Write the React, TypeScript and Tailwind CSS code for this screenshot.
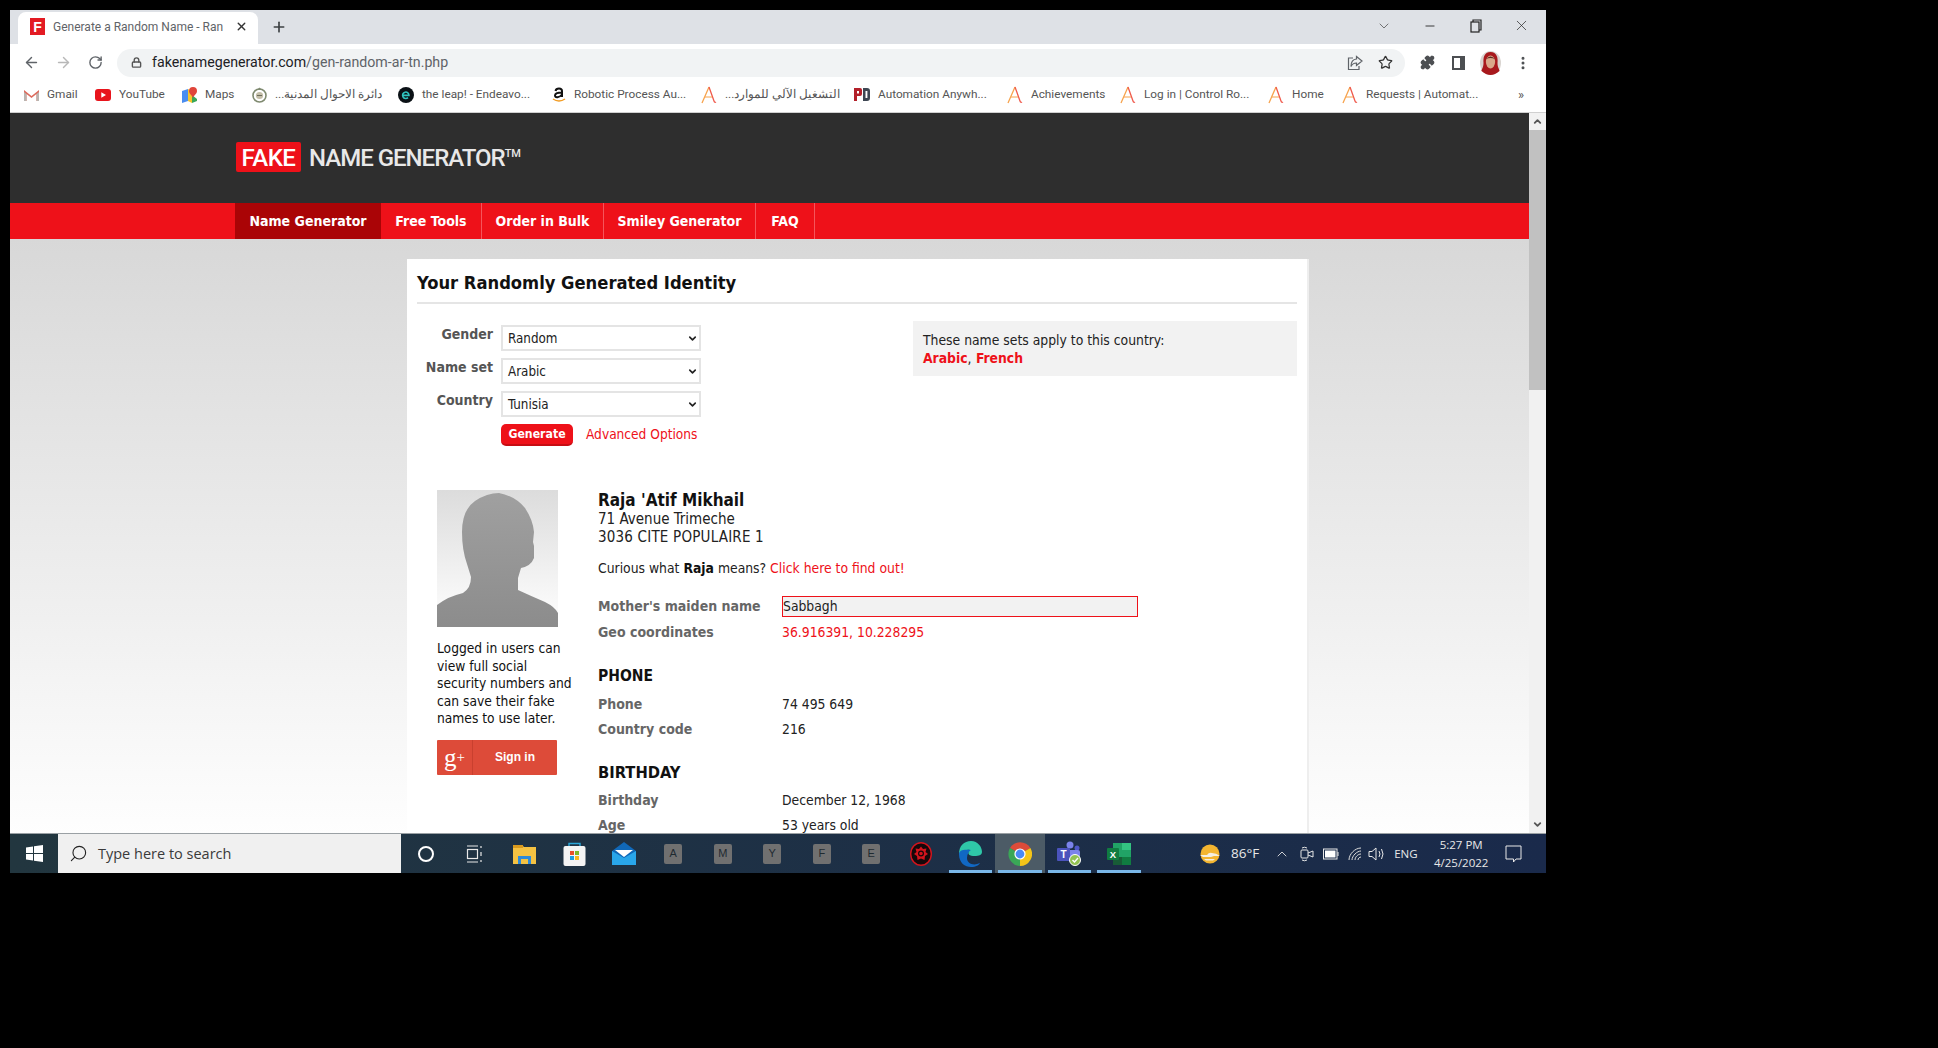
import React from "react";
import {
  ArrowLeft,
  ArrowRight,
  RotateCw,
  Lock,
  Star,
  Puzzle,
  EllipsisVertical,
  ChevronDown,
  ChevronUp,
  Minus,
  X,
  Plus,
  Search,
} from "lucide-react";

const tahoma = "font-['DejaVu_Sans_Condensed','DejaVu_Sans',sans-serif]";

function AIcon() {
  return (
    <svg width="16" height="18" viewBox="0 0 16 18" fill="none">
      <path d="M1 17 L8 1" stroke="#f7a24b" strokeWidth="1.3" />
      <path d="M8 1 L13 15 Q13.6 17 15 16" stroke="#ef5a4c" strokeWidth="1.3" />
      <path d="M4 11 L11 11" stroke="#f7a24b" strokeWidth="1" />
    </svg>
  );
}

function GmailIcon() {
  return (
    <svg width="15" height="12" viewBox="0 0 15 12">
      <path d="M0 1 L7.5 7 L15 1 V12 H12.5 V5 L7.5 9 L2.5 5 V12 H0 Z" fill="#dd6a5c" />
      <path d="M0 3 V12 H2.5 V5 Z M15 3 V12 H12.5 V5 Z" fill="#b9b4b0" />
    </svg>
  );
}

function YoutubeIcon() {
  return (
    <svg width="16" height="12" viewBox="0 0 16 12">
      <rect width="16" height="12" rx="3" fill="#e8141c" />
      <path d="M6.3 3.2 L11 6 L6.3 8.8 Z" fill="#fff" />
    </svg>
  );
}

function MapsIcon() {
  return (
    <svg width="15" height="16" viewBox="0 0 15 16">
      <path d="M0 4 L6 2 V14 L0 16 Z" fill="#4a8df0" />
      <path d="M6 2 L10 4 V16 L6 14 Z" fill="#f7c52b" />
      <path d="M10 8 L15 12 V14 L10 16 Z" fill="#3aa757" />
      <path d="M11 0 A4 4 0 0 1 15 4 C15 7 12 8 11 11 C10 8 7 7 7 4 A4 4 0 0 1 11 0 Z" fill="#e0453a" />
    </svg>
  );
}

function SealIcon() {
  return (
    <svg width="15" height="16" viewBox="0 0 15 16" fill="none">
      <circle cx="7.5" cy="8.5" r="6.5" stroke="#7f8a70" strokeWidth="1.6" />
      <circle cx="7.5" cy="8.5" r="3.6" fill="#c4bfa9" />
      <path d="M5 3 L7.5 0.5 L10 3 Z" fill="#7f8a70" />
      <path d="M5 8.5 H10" stroke="#6d6d5c" />
    </svg>
  );
}

function EIcon() {
  return (
    <svg width="16" height="16" viewBox="0 0 16 16">
      <circle cx="8" cy="8" r="8" fill="#0b1116" />
      <path d="M4.8 8.4 H11 A3.2 3.2 0 1 0 10 10.6" fill="none" stroke="#2fc4c0" strokeWidth="1.6" />
    </svg>
  );
}

function AmazonIcon() {
  return (
    <svg width="14" height="16" viewBox="0 0 14 16" fill="none">
      <path d="M3.5 4 Q4 1.5 7 1.5 Q10 1.5 10 4 V10 M10 5.5 Q3 5.5 3 8.5 Q3 10.5 5.5 10.2 Q8 10 10 7.5" stroke="#111" strokeWidth="2" />
      <path d="M1 12 Q7 16 13 12" stroke="#f29a1f" strokeWidth="1.5" />
    </svg>
  );
}

function PdIcon() {
  return (
    <svg width="16" height="13" viewBox="0 0 16 13">
      <path d="M0 0 H6 Q8 0 8 2 V6 Q8 8 6 8 H3 V13 H0 Z M3 3 V5.5 H5 V3 Z" fill="#b3202a" fillRule="evenodd" />
      <path d="M9 0 H13 Q16 0 16 3 V10 Q16 13 13 13 H9 Z M11.5 3 V10 H13.4 V3 Z" fill="#3d4652" fillRule="evenodd" />
    </svg>
  );
}

const bookmarks = [
  { icon: <GmailIcon />, label: "Gmail", width: "w-[71px]" },
  { icon: <YoutubeIcon />, label: "YouTube", width: "w-[87px]" },
  { icon: <MapsIcon />, label: "Maps", width: "w-[70px]" },
  { icon: <SealIcon />, label: "دائرة الاحوال المدنية...", width: "w-[146px]" },
  { icon: <EIcon />, label: "the leap! - Endeavo...", width: "w-[154px]" },
  { icon: <AmazonIcon />, label: "Robotic Process Au...", width: "w-[149px]" },
  { icon: <AIcon />, label: "التشغيل الآلي للموارد...", width: "w-[153px]" },
  { icon: <PdIcon />, label: "Automation Anywh...", width: "w-[153px]" },
  { icon: <AIcon />, label: "Achievements", width: "w-[113px]" },
  { icon: <AIcon />, label: "Log in | Control Ro...", width: "w-[148px]" },
  { icon: <AIcon />, label: "Home", width: "w-[74px]" },
  { icon: <AIcon />, label: "Requests | Automat...", width: "w-[152px]" },
];

function SelectRow({ label, value }: { label: string; value: string }) {
  return (
    <div className="flex items-start h-[33px]">
      <div className="w-[84px] pr-2 text-right font-bold text-[14px] leading-[19px] text-[#555]">{label}</div>
      <div className="w-[200px] h-[26px] flex items-center justify-between border-2 border-[#e4e4e4] bg-white pl-[5px] pr-[1px] pt-[1px] text-[13.3px] text-[#222]">
        <span>{value}</span>
        <ChevronDown size={11} strokeWidth={3.5} className="text-[#222]" />
      </div>
    </div>
  );
}

function Row({ label, children, className }: { label: string; children: React.ReactNode; className?: string }) {
  return (
    <div className={"flex items-center " + (className ?? "")}>
      <div className="w-[184px] font-bold text-[14px] text-[#666]">{label}</div>
      <div className="text-[13.8px] text-[#222]">{children}</div>
    </div>
  );
}

function Silhouette() {
  return (
    <div className="w-[121px] h-[137px] bg-gradient-to-b from-[#dcdcdc] to-white">
      <svg width="121" height="137" viewBox="0 0 121 137">
        <defs>
          <linearGradient id="sil" x1="0" y1="0" x2="0" y2="1">
            <stop offset="0" stopColor="#a0a0a0" />
            <stop offset="1" stopColor="#8c8c8c" />
          </linearGradient>
        </defs>
        <path
          d="M62 3 Q78 6 88 18 Q96 30 97 42 L96 52 L97 56 L97 68 Q94 76 84 78 L81 88 L81 100 Q94 106 108 112 Q118 117 121 123 V137 H0 V115 Q12 106 26 103 Q34 98 34 87 L30 74 Q25 60 25 42 Q25 20 38 11 Q50 3 62 3 Z"
          fill="url(#sil)"
        />
      </svg>
    </div>
  );
}

function TaskTile({ letter }: { letter: string }) {
  return (
    <div className="w-[18px] h-[20px] rounded-[2px] bg-[#707070] text-[#1f2a30] text-[11px] font-['Liberation_Sans',sans-serif] flex items-center justify-center">
      {letter}
    </div>
  );
}

const taskIcons: { key: string; node: React.ReactNode; active?: boolean; underline?: boolean }[] = [
  {
    key: "cortana",
    node: <div className="w-[16px] h-[16px] rounded-full border-2 border-white" />,
  },
  {
    key: "taskview",
    node: (
      <svg width="18" height="18" viewBox="0 0 18 18" fill="none" stroke="#e8e8e8" strokeWidth="1.2">
        <path d="M1 1 H12 M1 17 H12" />
        <rect x="1.5" y="4.5" width="10" height="9" />
        <path d="M15 1 V3 M15 7 V11 M15 15 V17" />
      </svg>
    ),
  },
  {
    key: "explorer",
    node: (
      <svg width="23" height="20" viewBox="0 0 23 20">
        <path d="M0 1 H9 L11 3 H23 V20 H0 Z" fill="#f5c242" />
        <rect x="0" y="1" width="10" height="3" fill="#d99a1e" />
        <path d="M5 12 H18 V20 H15 V15 H8 V20 H5 Z" fill="#2e8ad8" />
        <rect x="9" y="16" width="5" height="4" fill="#f5c242" />
      </svg>
    ),
  },
  {
    key: "store",
    node: (
      <svg width="23" height="24" viewBox="0 0 23 24">
        <path d="M6 5 V1.5 H17 V5" fill="none" stroke="#2aa6d8" strokeWidth="1.4" />
        <rect x="0.5" y="4" width="22" height="20" rx="2" fill="#f4f4f4" />
        <rect x="7" y="9" width="4" height="4" fill="#e8502a" />
        <rect x="12" y="9" width="4" height="4" fill="#7db928" />
        <rect x="7" y="14" width="4" height="4" fill="#1e9fe0" />
        <rect x="12" y="14" width="4" height="4" fill="#f7b81e" />
      </svg>
    ),
  },
  {
    key: "mail",
    node: (
      <svg width="24" height="23" viewBox="0 0 24 23">
        <path d="M0 9 L12 0 L24 9 V23 H0 Z" fill="#1068b8" />
        <path d="M3 8 H21 L12 15 Z" fill="#ffffff" />
        <path d="M0 9 L12 16 L24 9 V23 H0 Z" fill="#29a6ea" />
      </svg>
    ),
  },
  { key: "a", node: <TaskTile letter="A" /> },
  { key: "m", node: <TaskTile letter="M" /> },
  { key: "y", node: <TaskTile letter="Y" /> },
  { key: "f", node: <TaskTile letter="F" /> },
  { key: "e", node: <TaskTile letter="E" /> },
  {
    key: "red",
    node: (
      <svg width="22" height="24" viewBox="0 0 22 24">
        <ellipse cx="11" cy="12" rx="10.3" ry="11.3" fill="#16080a" stroke="#d3141c" strokeWidth="1.4" />
        <path d="M11 4.5 L13 7 L16.5 6.5 L15.5 10 L18 12 L15 14 L14.5 18 L11 16.5 L7.5 18 L7 14 L4 12 L6.5 10 L5.5 6.5 L9 7 Z" fill="#d3141c" />
        <circle cx="11" cy="11.5" r="2.4" fill="none" stroke="#16080a" strokeWidth="1.2" />
      </svg>
    ),
  },
  {
    key: "edge",
    underline: true,
    node: (
      <svg width="24" height="26" viewBox="0 0 24 26">
        <path d="M1 13 C1 5 6 0 13 0 C20 0 24 6 24 11 C24 15 19 15 15 15 C10 15 9 11 12 9 C7 8 3 11 3 16 Z" fill="#2fc7a8" />
        <path d="M1 13 C1 22 7 26 13 26 C18 26 21 24 22 22 C16 25 9 23 9 17 C9 13 11 10 13 9 C6 8 1 9 1 13 Z" fill="#1168c4" />
      </svg>
    ),
  },
  {
    key: "chrome",
    active: true,
    underline: true,
    node: (
      <svg width="24" height="24" viewBox="0 0 24 24">
        <path d="M12 12 L2 6 A12 12 0 0 1 22.4 6 Z" fill="#dd4b39" />
        <path d="M12 12 L22.4 6 A12 12 0 0 1 12 24 Z" fill="#f5c518" />
        <path d="M12 12 L12 24 A12 12 0 0 1 2 6 Z" fill="#3aa757" />
        <circle cx="12" cy="12" r="5.6" fill="#fff" />
        <circle cx="12" cy="12" r="4.4" fill="#4a8af4" />
      </svg>
    ),
  },
  {
    key: "teams",
    underline: true,
    node: (
      <svg width="24" height="25" viewBox="0 0 24 25">
        <circle cx="13" cy="4" r="3.5" fill="#7b83eb" />
        <circle cx="20" cy="7" r="2.5" fill="#5059c9" />
        <rect x="11" y="9" width="12" height="10" rx="2" fill="#7b83eb" />
        <rect x="0" y="7" width="13" height="13" rx="1" fill="#4b53bc" />
        <text x="6.5" y="17" fontSize="10" fontWeight="700" fill="#fff" textAnchor="middle" fontFamily="Liberation Sans">T</text>
        <circle cx="18" cy="19" r="5.5" fill="#92c353" stroke="#fff" strokeWidth="1" />
        <path d="M15.5 19 L17.5 21 L21 17" fill="none" stroke="#fff" strokeWidth="1.4" />
      </svg>
    ),
  },
  {
    key: "excel",
    underline: true,
    node: (
      <svg width="24" height="22" viewBox="0 0 24 22">
        <rect x="6" y="0" width="18" height="22" fill="#21a366" />
        <rect x="15" y="0" width="9" height="7" fill="#33c481" />
        <rect x="15" y="14" width="9" height="8" fill="#107c41" />
        <rect x="6" y="14" width="9" height="8" fill="#185c37" />
        <rect x="0" y="5" width="12" height="12" rx="1" fill="#107c41" />
        <text x="6" y="14.5" fontSize="9.5" fontWeight="700" fill="#fff" textAnchor="middle" fontFamily="Liberation Sans">X</text>
      </svg>
    ),
  },
];

export default function App() {
  return (
    <div className="w-[1938px] h-[1048px] bg-black pt-[10px] pl-[10px] font-['Liberation_Sans',sans-serif] overflow-hidden">
      <div className="w-[1536px] flex flex-col">
        {/* tab strip */}
        <div className="h-[34px] bg-[#dee1e6] flex items-end text-[#45494d]">
          <div className="ml-[8px] w-[240px] h-[32px] bg-white rounded-t-[8px] flex items-center pl-[12px] pr-[7px] pb-[3px]">
            <div className="w-[15px] h-[17px] bg-[#e31b23] flex items-center justify-center text-white font-bold text-[14px] leading-none">F</div>
            <div className="ml-[8px] w-[176px] overflow-hidden whitespace-nowrap font-['Roboto',sans-serif] text-[12px] text-[#5f6368]">Generate a Random Name - Ran</div>
            <X size={13} strokeWidth={2.5} className="ml-[6px] text-[#333]" />
          </div>
          <Plus size={16} strokeWidth={2.5} className="ml-[13px] mb-[9px] text-[#3c4043]" />
          <div className="flex-1" />
          <div className="flex items-center h-full pb-[3px] pr-[16px]">
            <ChevronDown size={16} strokeWidth={1.2} className="text-[#555]" />
            <Minus size={14} strokeWidth={1.5} className="ml-[31px] text-[#222]" />
            <svg width="12" height="14" viewBox="0 0 12 14" fill="none" stroke="#222" strokeWidth="1.2" className="ml-[33px]">
              <rect x="1" y="3" width="8" height="10" />
              <path d="M3 3 V1 H11 V11 H9" />
            </svg>
            <X size={17} strokeWidth={1} className="ml-[31px] text-[#222]" />
          </div>
        </div>

        {/* toolbar */}
        <div className="h-[37px] bg-white flex items-center text-[#5f6368]">
          <ArrowLeft size={17} strokeWidth={2} className="ml-[13px]" />
          <ArrowRight size={17} strokeWidth={2} className="ml-[15px] text-[#b8b8b8]" />
          <RotateCw size={15} strokeWidth={2.2} className="ml-[16px]" />
          <div className="ml-[14px] w-[1288px] h-[28px] rounded-full bg-[#f1f3f4] flex items-center pl-[14px] pr-[12px]">
            <Lock size={11} strokeWidth={3} className="text-[#555]" />
            <span className="ml-[10px] font-['Roboto',sans-serif] text-[14.2px] text-[#202124]">
              fakenamegenerator.com<span className="text-[#5f6368]">/gen-random-ar-tn.php</span>
            </span>
            <div className="flex-1" />
            <svg width="16" height="16" viewBox="0 0 16 16" fill="none" stroke="#5f6368" strokeWidth="1.2" className="mr-[-2px]">
              <path d="M6 3 H1.5 V14.5 H12 V11" />
              <path d="M9.5 1.5 L15 6 L9.5 10.5 V8 Q5.5 8 4 11.5 Q4 4.5 9.5 4 Z" />
            </svg>
            <Star size={15} strokeWidth={2} className="ml-[17px] text-[#333]" />
          </div>
          <Puzzle size={15} fill="currentColor" className="ml-[15px] text-[#4c4f52]" />
          <div className="ml-[17px] w-[13px] h-[14px] border-2 border-[#4c4f52] border-r-[5px]" />
          <svg width="21" height="24" viewBox="0 0 21 24" className="ml-[15px]">
            <ellipse cx="10.5" cy="12" rx="10.5" ry="12" fill="#d9d4d0" />
            <path d="M10.5 1 C4 1 3 7 3.5 12 C3.5 17 1 19 1.5 20 Q6 24 10.5 24 Q15 24 19.5 20 C20 19 17.5 17 17.5 12 C18 7 17 1 10.5 1 Z" fill="#a8191d" />
            <ellipse cx="10.5" cy="11" rx="4.6" ry="6.4" fill="#d9a88a" />
            <path d="M6 8 Q10.5 3 15 8 Q10.5 6 6 8 Z" fill="#5a2a20" />
          </svg>
          <EllipsisVertical size={16} strokeWidth={2.5} className="ml-[14px] text-[#4c4f52]" />
        </div>

        {/* bookmarks */}
        <div className="h-[32px] bg-white border-b border-[#d0d0d0] flex items-center pl-[14px] pb-[4px] font-['Roboto',sans-serif] text-[11.8px] text-[#555]">
          {bookmarks.map((b) => (
            <div key={b.label} className={"flex items-center gap-[8px] whitespace-nowrap overflow-hidden " + b.width}>
              {b.icon}
              <span dir="auto">{b.label}</span>
            </div>
          ))}
          <span className="ml-[24px] text-[13px]">»</span>
        </div>

        {/* page + scrollbar */}
        <div className={"h-[720px] flex overflow-hidden " + tahoma}>
          <div className="w-[1519px] flex flex-col">
            <div className="h-[90px] shrink-0 bg-[#2e2e2e] pl-[226px] pt-[29px]">
              <div className="flex items-center h-[30px]">
                <div className="w-[65px] h-[30px] bg-[#ee1119] rounded-[2px] flex items-center justify-center text-white font-['Roboto',sans-serif] text-[24px] font-medium tracking-[-0.5px] pt-[1px]">FAKE</div>
                <div className="ml-[8px] pt-[1px] text-[#e8e8e8] font-['Roboto',sans-serif] text-[24px] font-medium tracking-[-1px] whitespace-nowrap">NAME GENERATOR<sup className="text-[11px] -top-[9px] tracking-normal">TM</sup></div>
              </div>
            </div>
            <div className="h-[36px] shrink-0 bg-[#ee1119] pl-[225px] flex text-white font-bold text-[14px]">
              <div className="w-[146px] bg-[#aa0406] flex items-center justify-center">Name Generator</div>
              <div className="w-[101px] border-r border-[#f5555b] flex items-center justify-center">Free Tools</div>
              <div className="w-[122px] border-r border-[#f5555b] flex items-center justify-center">Order in Bulk</div>
              <div className="w-[152px] border-r border-[#f5555b] flex items-center justify-center">Smiley Generator</div>
              <div className="w-[59px] border-r border-[#f5555b] flex items-center justify-center">FAQ</div>
            </div>
            <div className="flex-1 bg-gradient-to-b from-[#d8d8d8] to-white to-[85%] pt-[20px] pl-[397px]">
              <div className="w-[902px] h-[700px] bg-white px-[10px] border-r-2 border-[#eeeeee]">
                <div className="h-[45px] pt-[4px] border-b-2 border-[#e5e5e5] flex items-center font-bold text-[18.2px] text-[#111]">Your Randomly Generated Identity</div>
                <div className="flex justify-between mt-[21px]">
                  <div>
                    <SelectRow label="Gender" value="Random" />
                    <SelectRow label="Name set" value="Arabic" />
                    <SelectRow label="Country" value="Tunisia" />
                    <div className="flex items-center pl-[84px]">
                      <div className="w-[72px] h-[22px] rounded-[5px] bg-[#ee1119] border-b-2 border-[#c70d13] text-white text-[12.2px] font-bold flex items-center justify-center">Generate</div>
                      <div className="ml-[13px] -mt-[2px] text-[#ee1119] text-[13.6px]">Advanced Options</div>
                    </div>
                  </div>
                  <div className="w-[384px] h-[55px] bg-[#f2f2f2] mt-[-4px] pl-[10px] pt-[10px] text-[13.8px] leading-[18px] text-[#222]">
                    These name sets apply to this country:
                    <div className="text-[#ee1119] font-bold">
                      Arabic<span className="text-[#222] font-normal">,</span> French
                    </div>
                  </div>
                </div>

                <div className="flex mt-[44px] pl-[20px]">
                  <div className="w-[161px]">
                    <Silhouette />
                    <div className="mt-[13px] w-[137px] text-[13.7px] leading-[17.5px] text-[#111]">
                      Logged in users can view full social security numbers and can save their fake names to use later.
                    </div>
                    <div className="mt-[12px] w-[120px] h-[35px] bg-[#dd4b39] rounded-[1px] flex items-center text-white">
                      <div className="w-[36px] h-full border-r border-[#c9402f] flex items-center justify-center font-['Liberation_Serif',serif] text-[25px] leading-none">
                        g<span className="text-[15px]">+</span>
                      </div>
                      <div className="flex-1 text-center text-[12px] font-bold font-['Liberation_Sans',sans-serif]">Sign in</div>
                    </div>
                  </div>
                  <div className="flex-1">
                    <div className="font-bold text-[17px] leading-[20px] text-[#111]">Raja 'Atif Mikhail</div>
                    <div className="text-[15px] leading-[18px] text-[#222]">71 Avenue Trimeche</div>
                    <div className="text-[15px] tracking-[0.2px] leading-[18px] text-[#222]">3036 CITE POPULAIRE 1</div>
                    <div className="mt-[13px] text-[13.8px] leading-[18px] text-[#222]">
                      Curious what <b className="text-[#111]">Raja</b> means? <span className="text-[#ee1119]">Click here to find out!</span>
                    </div>
                    <Row label="Mother's maiden name" className="mt-[18px] h-[22px]">
                      <div className="w-[356px] h-[21px] bg-[#f2f2f2] border border-[#ee1119] flex items-center">Sabbagh</div>
                    </Row>
                    <Row label="Geo coordinates" className="mt-[4px] h-[22px]">
                      <span className="text-[#ee1119]">36.916391, 10.228295</span>
                    </Row>
                    <div className="mt-[22px] font-bold text-[15.5px] leading-[22px] text-[#111]">PHONE</div>
                    <Row label="Phone" className="mt-[6px] h-[22px]">74 495 649</Row>
                    <Row label="Country code" className="mt-[3px] h-[22px]">216</Row>
                    <div className="mt-[22px] font-bold text-[16.4px] leading-[22px] text-[#111]">BIRTHDAY</div>
                    <Row label="Birthday" className="mt-[5px] h-[22px]">December 12, 1968</Row>
                    <Row label="Age" className="mt-[3px] h-[22px]">53 years old</Row>
                  </div>
                </div>
              </div>
            </div>
          </div>
          <div className="w-[17px] bg-[#f1f1f1] flex flex-col items-center text-[#555]">
            <ChevronUp size={11} strokeWidth={4} className="mt-[3px]" />
            <div className="w-full h-[260px] mt-[3px] bg-[#c1c1c1]" />
            <div className="flex-1" />
            <ChevronDown size={11} strokeWidth={4} className="mb-[3px]" />
          </div>
        </div>

        {/* taskbar */}
        <div className="h-[40px] bg-gradient-to-r from-[#22363f] to-[#1a2a4b] border-t border-[#9aa0a4] flex items-stretch text-white font-['Open_Sans',sans-serif]">
          <div className="w-[48px] flex items-center justify-center">
            <svg width="17" height="17" viewBox="0 0 17 17" fill="#fff">
              <path d="M0 2.4 L7 1.4 V8 H0 Z M8 1.3 L17 0 V8 H8 Z M0 9 H7 V15.6 L0 14.6 Z M8 9 H17 V17 L8 15.7 Z" />
            </svg>
          </div>
          <div className="w-[343px] bg-[#f0f0f0] flex items-center pl-[11px] text-[#3a3a3a] text-[14.5px]">
            <Search size={19} strokeWidth={1.4} className="-scale-x-100 text-[#222]" />
            <span className="ml-[10px]">Type here to search</span>
          </div>
          <div className="flex w-[743px]">
            {taskIcons.map((t) => (
              <div
                key={t.key}
                className={"relative w-[49.5px] flex items-center justify-center " + (t.active ? "bg-[#4c5b66]" : "")}
              >
                {t.node}
                {t.underline && <div className="absolute bottom-0 left-[3px] right-[3px] h-[3px] bg-[#7ab7e8]" />}
              </div>
            ))}
          </div>
          <div className="flex-1 flex items-center text-[13px] text-[#e8e8e8]">
            <svg width="20" height="22" viewBox="0 0 20 22" className="ml-[56px] shrink-0">
              <circle cx="10" cy="11" r="9.5" fill="#f3b530" />
              <path d="M0 12 H7 Q9 9 12 10 Q16 10 20 13 H14 L11 14 H3 Z" fill="#f4efe2" />
              <path d="M4 16 H15 L13 17.5 H6 Z" fill="#f4efe2" />
            </svg>
            <span className="ml-[11px] text-[13.5px]">86°F</span>
            <ChevronUp size={16} strokeWidth={1.3} className="ml-[15px]" />
            <svg width="14" height="16" viewBox="0 0 14 16" fill="none" stroke="#e8e8e8" strokeWidth="1" className="ml-[10px]">
              <rect x="1" y="4" width="7" height="8" rx="1" />
              <path d="M8 7 L13 5 V11 L8 9 M2 2 Q4.5 0.5 7 2 M2 14 Q4.5 15.5 7 14" />
            </svg>
            <svg width="16" height="12" viewBox="0 0 16 12" fill="none" stroke="#e8e8e8" className="ml-[9px]">
              <rect x="0.5" y="1" width="13.5" height="10" />
              <rect x="2" y="2.5" width="10.5" height="7" fill="#fff" stroke="none" />
              <rect x="14.5" y="4" width="1" height="4" fill="#e8e8e8" stroke="none" />
            </svg>
            <svg width="14" height="14" viewBox="0 0 14 14" fill="none" stroke="#ddd" strokeWidth="1" className="ml-[9px]">
              <path d="M1 13 C1 7 7 1 13 1 M4 13 C4 9 9 4 13 4 M7 13 C7 10 10 7 13 7 M10 13 C10 11.5 11.5 10 13 10" />
            </svg>
            <svg width="17" height="16" viewBox="0 0 17 16" fill="none" stroke="#e8e8e8" strokeWidth="1" className="ml-[6px]">
              <path d="M1 5.5 H4 L8 2 V14 L4 10.5 H1 Z M11 5 Q13 8 11 11 M13.5 3 Q16.5 8 13.5 13" />
            </svg>
            <span className="ml-[9px] text-[11.5px] w-[26px]">ENG</span>
            <div className="ml-[13px] w-[56px] text-center text-[11.5px] leading-[18px] whitespace-nowrap">
              <div>5:27 PM</div>
              <div>4/25/2022</div>
            </div>
            <svg width="17" height="18" viewBox="0 0 17 18" fill="none" stroke="#e8e8e8" strokeWidth="1" className="ml-[16px]">
              <path d="M1 1 H16 V14 H11 L8.5 17 V14 H1 Z" />
            </svg>
          </div>
        </div>
      </div>
    </div>
  );
}
